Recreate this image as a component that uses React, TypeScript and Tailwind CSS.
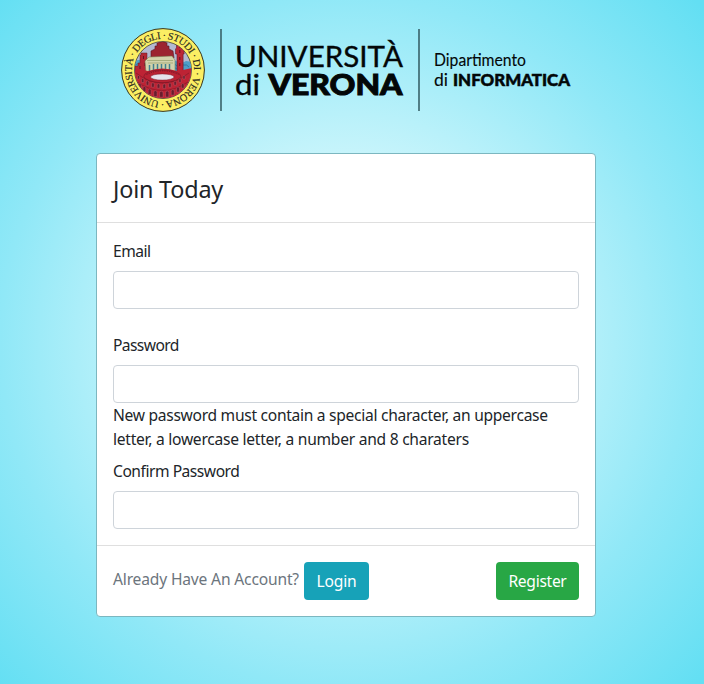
import React from "react";

const sans = "font-['Noto_Sans','Open_Sans',sans-serif]";

// One masonry arch of the arena wall, open at the bottom.
function Arch({ x, y, w, h }: { x: number; y: number; w: number; h: number }) {
  return (
    <path
      d={`M${x} ${y + h}V${y + w / 2}a${w / 2} ${w / 2} 0 0 1 ${w} 0V${y + h}z`}
      fill="#6a1c2c"
      stroke="#d0808a"
      strokeWidth="0.3"
    />
  );
}

const lowerArches = [
  [17.5, 55.5, 2.6, 4.5], [22, 58.5, 2.8, 5], [27.2, 61, 3, 5.5], [32.8, 62.6, 3.2, 6],
  [38.6, 63.2, 3.4, 6], [44.6, 63, 3.2, 6], [50.2, 61.6, 3, 5.5], [55.6, 59, 2.8, 5], [60.4, 55.6, 2.6, 4.5],
];
const upperArches = [
  [16.5, 47.5, 2, 3.5], [20.6, 50.5, 2.2, 4], [25.3, 53, 2.4, 4.2], [30.6, 54.8, 2.6, 4.4],
  [36.2, 55.8, 2.6, 4.4], [42, 56, 2.6, 4.4], [47.6, 55, 2.6, 4.2], [53, 53.2, 2.4, 4], [57.8, 50.6, 2.2, 3.8], [62, 47.5, 2, 3.5],
];

function Logo() {
  return (
    <svg className="block h-[92px] w-[460px]" viewBox="118 24 460 92" role="img" aria-label="Università di Verona">
      <defs>
        <clipPath id="sealField">
          <circle cx="42" cy="42" r="28.3" />
        </clipPath>
        <path id="sealText" d="M42 42m-31.2 0a31.2 31.2 0 1 1 62.4 0a31.2 31.2 0 1 1 -62.4 0" transform="rotate(-83 42 42)" />
      </defs>
      <g transform="translate(121 28)">
        <circle cx="42" cy="42" r="41.4" fill="#fbee63" stroke="#37361f" strokeWidth="1" />
        <circle cx="42" cy="42" r="28.5" fill="#b3b9d2" stroke="#44402f" strokeWidth="0.8" />
        <g clipPath="url(#sealField)">
          <path d="M12 34q6-4 12-1v12H12zM49 33q4-2 8 1q4 2 8-1q4 0 8 3v9H49z" fill="#4f9fc8" />
          <path d="M14 37q5-3 9 1M50 36q4-1 6 2M62 37q4-1 6 2M51 40q3-1 5 1" fill="none" stroke="#28709a" strokeWidth="0.8" />
          <path d="M30 30v-7l4-2v-3h2v-3q6-3 10 0v3h2v3l4 2 1 7z" fill="#9c2430" stroke="#571a24" strokeWidth="0.6" />
          <path d="M14 45V38h3v-3h2v-8h1v-2h6v9h2v11z" fill="#b32736" stroke="#651927" strokeWidth="0.5" />
          <path d="M19 38v3M22.5 28v3M24 35v3" stroke="#5a1727" strokeWidth="1" />
          <path d="M24 33l4-4 23-1 3 4v14H25z" fill="#d3d3ac" stroke="#6c7548" strokeWidth="0.5" />
          <path d="M26 32.5h26M27 35h25" stroke="#8a965e" strokeWidth="0.6" />
          <path d="M28.5 37v7M32.5 36v7M36.5 36v6M40.5 36v6M44.5 36v6M48.5 36v7" stroke="#417f8e" strokeWidth="1.5" />
          <path d="M56 48V26h-1.5v-5l1-1v-3l3.3-2 3.3 2v3l1 1v5h-1v22z" fill="#bd2636" stroke="#671a29" strokeWidth="0.6" />
          <path d="M58.8 18v2M58.8 22v3M58.8 29v3M58.8 35v3" stroke="#5b1424" strokeWidth="1" />
          <path d="M13 43l4-2 5 1 5 1q14-5 29 0l6-1 9-2v38H13z" fill="#bd2334" />
          <ellipse cx="41.3" cy="48.3" rx="18.5" ry="6.4" fill="#b92233" stroke="#7a1828" strokeWidth="0.6" />
          <path d="M25.5 46.5q16-7.5 32 0" fill="none" stroke="#701829" strokeWidth="0.9" strokeDasharray="1.2 1.1" />
          <ellipse cx="41.3" cy="49" rx="11.8" ry="3.1" fill="#e5e2ec" stroke="#7f1a2b" strokeWidth="0.5" />
          <path d="M15 45q26 20 53 0M16 54q25 17 51 0" fill="none" stroke="#7b1928" strokeWidth="0.6" />
          {upperArches.map(([x, y, w, h]) => <Arch key={x} x={x} y={y} w={w} h={h} />)}
          {lowerArches.map(([x, y, w, h]) => <Arch key={x} x={x} y={y} w={w} h={h} />)}
        </g>
        <text className="font-['Liberation_Serif',serif]" fontSize="10.2" fill="#29281d" stroke="#29281d" strokeWidth="0.15">
          <textPath href="#sealText" textLength="194" lengthAdjust="spacing" startOffset="0">UNIVERSITÀ · DEGLI · STUDI · DI · VERONA ·</textPath>
        </text>
      </g>
      <path d="M221 29v82M419 29v82" stroke="#39636a" strokeWidth="1.6" />
      <g className="font-[Lato,sans-serif]" fill="#030708" stroke="#030708">
        <text x="235" y="67.3" fontSize="29.6" strokeWidth="0.35" textLength="168" lengthAdjust="spacingAndGlyphs">UNIVERSITÀ</text>
        <text x="235" y="94.7" fontSize="29.5" strokeWidth="0.35" textLength="25" lengthAdjust="spacingAndGlyphs">di</text>
        <text x="268.5" y="94.5" fontSize="28.8" fontWeight="900" strokeWidth="1" textLength="134" lengthAdjust="spacingAndGlyphs">VERONA</text>
        <text x="434" y="65.8" fontSize="16.3" strokeWidth="0.1" textLength="92" lengthAdjust="spacingAndGlyphs">Dipartimento</text>
        <text x="434" y="86" fontSize="16.3" strokeWidth="0.1" textLength="14" lengthAdjust="spacingAndGlyphs">di</text>
        <text x="453" y="86" fontSize="16.2" fontWeight="900" strokeWidth="0.5" textLength="117" lengthAdjust="spacingAndGlyphs">INFORMATICA</text>
      </g>
    </svg>
  );
}

const inputClass = "block h-[38px] w-full rounded border border-[#ced4da] bg-white px-3 outline-none";

export default function App() {
  return (
    <main className={`${sans} flex h-[684px] w-[704px] flex-col overflow-hidden bg-[radial-gradient(circle_at_345px_342px,#ffffff_0px,#c6f4fb_190px,#90e8f7_345px,#63dff3_490px)] text-[15.6px] leading-6 text-[#212529]`}>
      <header className="ml-[118px] mt-6">
        <Logo />
      </header>
      <form className="ml-24 mt-[37px] flex h-[464px] w-[500px] flex-col rounded border border-[#7cb7c0] bg-white" onSubmit={(e) => e.preventDefault()}>
        <div className="h-[69px] border-b border-[#dfdfdf] px-4 pt-[17px]">
          <h1 className="text-[23.4px] leading-9 tracking-[-0.2px]"><span>Join Today</span></h1>
        </div>
        <div className="px-4 pt-4">
          <label className="mb-2 block tracking-[-0.5px]"><span>Email</span></label>
          <input className={inputClass} type="email" />
          <label className="mb-2 mt-6 block tracking-[-0.6px]"><span>Password</span></label>
          <input className={inputClass} type="password" />
          <p className="whitespace-nowrap"><span className="tracking-[-0.29px]">New password must contain a special character, an uppercase</span><br /><span className="tracking-[-0.26px]">letter, a lowercase letter, a number and 8 charaters</span></p>
          <label className="mb-2 mt-2 block tracking-[-0.47px]"><span>Confirm Password</span></label>
          <input className={inputClass} type="password" />
        </div>
        <div className="mt-4 flex items-start justify-between border-t border-[#dfdfdf] px-4 pt-4">
          <div className="flex items-start">
            <span className="w-[191px] whitespace-nowrap pt-[5px] tracking-[-0.17px] text-[#6c757d]">Already Have An Account?</span>
            <button type="button" className="h-[38px] w-[65px] rounded bg-[#17a2b8] tracking-[-0.2px] text-white">Login</button>
          </div>
          <button type="submit" className="h-[38px] w-[83px] rounded bg-[#28a745] tracking-[-0.3px] text-white">Register</button>
        </div>
      </form>
    </main>
  );
}
